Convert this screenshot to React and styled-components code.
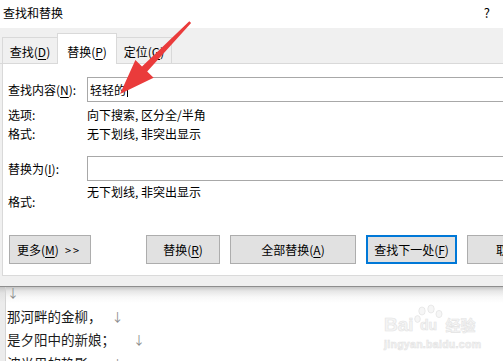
import React from 'react';
import styled, { createGlobalStyle } from 'styled-components';

const Global = createGlobalStyle`
  html, body { margin: 0; padding: 0; background: #fff; overflow: hidden; }
  body {
    font-family: "Noto Sans CJK SC", "Noto Sans", sans-serif;
    font-size: 12px;
    color: #000;
  }
  #root { width: 503px; height: 361px; }
`;

const Screen = styled.div`
  width: 503px;
  height: 361px;
  position: relative;
  overflow: hidden;
  display: flex;
  flex-direction: column;
`;

const Dialog = styled.div`
  display: flex;
  flex-direction: column;
  background: #f0f0f0;
  flex-shrink: 0;
  border-bottom: 1px solid #8e8e8e;
`;

const TitleBar = styled.div`
  height: 28px;
  box-sizing: border-box;
  background: #fff;
  display: flex;
  align-items: center;
  justify-content: space-between;
  padding: 0 13px 2px 3px;
  font-size: 12px;
  line-height: 18px;
`;

const Help = styled.span`
  font-size: 13px;
`;

const TabStrip = styled.div`
  height: 36px;
  box-sizing: border-box;
  display: flex;
  align-items: flex-end;
  padding-left: 2px;
  border-bottom: 1px solid #d9d9d9;
`;

const Tab = styled.div`
  box-sizing: border-box;
  width: ${(p) => p.$w}px;
  height: ${(p) => (p.$active ? 31 : 26)}px;
  margin-bottom: ${(p) => (p.$active ? -1 : 0)}px;
  padding-bottom: ${(p) => (p.$active ? 3 : 2)}px;
  display: flex;
  align-items: flex-end;
  justify-content: center;
  background: ${(p) => (p.$active ? '#fff' : '#f0f0f0')};
  border: 1px solid #d9d9d9;
  border-bottom: none;
  margin-left: ${(p) => (p.$overlap ? -1 : 0)}px;
  position: relative;
  z-index: ${(p) => (p.$active ? 1 : 0)};
  line-height: 18px;
  white-space: nowrap;
`;

const Accel = styled.span`
  text-decoration: underline;
  text-underline-offset: 2px;
`;

const Panel = styled.div`
  background: #fff;
  margin-left: 2px;
  border-left: 1px solid #d9d9d9;
  border-bottom: 1px solid #dadada;
  padding: 13px 0 11px 5px;
  display: flex;
  flex-direction: column;
`;

const FieldRow = styled.div`
  display: flex;
  align-items: ${(p) => (p.$top ? 'flex-start' : 'center')};
  margin-top: ${(p) => p.$mt || 0}px;
  line-height: 18px;
  white-space: nowrap;
`;

const Label = styled.div`
  width: 79px;
  flex-shrink: 0;
  margin-top: ${(p) => p.$mt || 0}px;
`;

const Value = styled.div`
  flex-shrink: 0;
`;

const Input = styled.div`
  flex-shrink: 0;
  width: 440px;
  height: 25px;
  box-sizing: border-box;
  border: 1px solid #a8a8a8;
  padding-left: 2px;
  display: flex;
  align-items: center;
  line-height: 18px;
`;

const Caret = styled.span`
  display: inline-block;
  width: 1px;
  height: 15px;
  background: #000;
  margin-left: 1px;
`;

const FooterStrip = styled.div`
  height: 10px;
`;

const Buttons = styled.div`
  display: flex;
  margin-top: 24px;
  padding-left: 1px;
`;

const Button = styled.div`
  flex-shrink: 0;
  box-sizing: border-box;
  width: ${(p) => p.$w}px;
  height: 29px;
  margin-left: ${(p) => p.$gap || 0}px;
  background: #e1e1e1;
  border: ${(p) => (p.$default ? '2px solid #0078d7' : '1px solid #adadad')};
  display: flex;
  align-items: center;
  justify-content: ${(p) => (p.$left ? 'flex-start' : 'center')};
  padding-left: ${(p) => (p.$left ? 7 : 0)}px;
  line-height: 18px;
  white-space: nowrap;
`;

const More = styled.span`
  margin-left: 6px;
  font-size: 11px;
  letter-spacing: 2px;
`;

const Doc = styled.div`
  flex: 1;
  display: flex;
  background: linear-gradient(#c6c6c6 0px, #e6e6e6 4px, #f8f8f8 10px, #fff 16px);
  overflow: hidden;
  position: relative;
`;

const DocEdge = styled.div`
  width: 5px;
  flex-shrink: 0;
  background: linear-gradient(#c6c6c6 0px, #e2e2e2 6px, #ececec 16px);
  border-right: 1px solid #d4d4d4;
`;

const DocText = styled.div`
  margin-top: -6px;
  padding-left: 1px;
  font-size: 13.5px;
  line-height: 22.5px;
  color: #1c1c1c;
  white-space: nowrap;
`;

const Line = styled.div``;

const Mark = styled.span`
  color: #8a8a8a;
  font-size: 12px;
  margin-left: ${(p) => p.$gap || 0}px;
`;

const Overlay = styled.svg`
  position: absolute;
  left: 0;
  top: 0;
  pointer-events: none;
  z-index: 5;
`;

const Watermark = styled.div`
  position: absolute;
  left: 384px;
  top: 304px;
  z-index: 4;
  color: #f5f5f5;
  -webkit-text-stroke: 0.6px #e4e4e4;
  font-family: "Liberation Sans", Arial, sans-serif;
  pointer-events: none;
`;

const WmTop = styled.div`
  display: flex;
  align-items: flex-end;
  font-size: 19px;
  font-weight: bold;
  line-height: 22px;
  height: 32px;
`;

const WmPaw = styled.span`
  position: relative;
  display: inline-flex;
  align-items: flex-end;
  width: 30px;
  height: 32px;
  justify-content: center;
  font-size: 14px;
`;

const WmCn = styled.span`
  font-family: "Noto Sans CJK SC", sans-serif;
  font-size: 15px;
  margin-left: 2px;
`;

const WmUrl = styled.div`
  font-size: 10.5px;
  font-weight: bold;
  line-height: 14px;
  margin-top: 1px;
  letter-spacing: 0.3px;
`;

const PawSvg = styled.svg`
  position: absolute;
  left: 0;
  top: 0;
`;

export default function App() {
  return (
    <Screen>
      <Global />
      <Dialog>
        <TitleBar>
          <span>查找和替换</span>
          <Help>?</Help>
        </TitleBar>
        <TabStrip>
          <Tab $w={56}>查找(<Accel>D</Accel>)</Tab>
          <Tab $w={60} $active $overlap>替换(<Accel>P</Accel>)</Tab>
          <Tab $w={56} $overlap>定位(<Accel>G</Accel>)</Tab>
        </TabStrip>
        <Panel>
          <FieldRow>
            <Label>查找内容(<Accel>N</Accel>):</Label>
            <Input>
              轻轻的<Caret />
            </Input>
          </FieldRow>
          <FieldRow $mt={4}>
            <Label>选项:</Label>
            <Value>向下搜索, 区分全/半角</Value>
          </FieldRow>
          <FieldRow $mt={1}>
            <Label>格式:</Label>
            <Value>无下划线, 非突出显示</Value>
          </FieldRow>
          <FieldRow $mt={13}>
            <Label>替换为(<Accel>I</Accel>):</Label>
            <Input />
          </FieldRow>
          <FieldRow $mt={2} $top>
            <Label $mt={10}>格式:</Label>
            <Value>无下划线, 非突出显示</Value>
          </FieldRow>
          <Buttons>
            <Button $w={82} $left>
              更多(<Accel>M</Accel>)<More>&gt;&gt;</More>
            </Button>
            <Button $w={74} $gap={55}>替换(<Accel>R</Accel>)</Button>
            <Button $w={126} $gap={10}>全部替换(<Accel>A</Accel>)</Button>
            <Button $w={91} $gap={10} $default>查找下一处(<Accel>F</Accel>)</Button>
            <Button $w={82} $gap={10}>取消</Button>
          </Buttons>
        </Panel>
        <FooterStrip />
      </Dialog>
      <Doc>
        <DocEdge />
        <DocText>
          <Line><Mark>↓</Mark></Line>
          <Line>那河畔的金柳，<Mark $gap={10}>↓</Mark></Line>
          <Line>是夕阳中的新娘；<Mark $gap={18}>↓</Mark></Line>
          <Line>波光里的艳影，<Mark $gap={10}>↓</Mark></Line>
        </DocText>
      </Doc>
      <Watermark>
        <WmTop>
          <span>Bai</span>
          <WmPaw>
            <PawSvg width="30" height="32" viewBox="0 0 30 32">
              <g fill="#f6f6f6" stroke="#e4e4e4" strokeWidth="0.8">
                <ellipse cx="8" cy="7" rx="3.2" ry="4" />
                <ellipse cx="17" cy="5" rx="3.2" ry="4" />
                <ellipse cx="25" cy="10" rx="3" ry="3.6" />
                <ellipse cx="3.5" cy="15" rx="2.8" ry="3.4" />
              </g>
            </PawSvg>
            du
          </WmPaw>
          <WmCn>经验</WmCn>
        </WmTop>
        <WmUrl>jingyan.baidu.com</WmUrl>
      </Watermark>
      <Overlay width="503" height="361" viewBox="0 0 503 361">
        <polygon
          points="189.3,21.3 191.1,23.1 147.2,71.4 153.6,77.8 120,94 135.4,60.1 142,66.4"
          fill="#ea3b3b"
        />
      </Overlay>
    </Screen>
  );
}
